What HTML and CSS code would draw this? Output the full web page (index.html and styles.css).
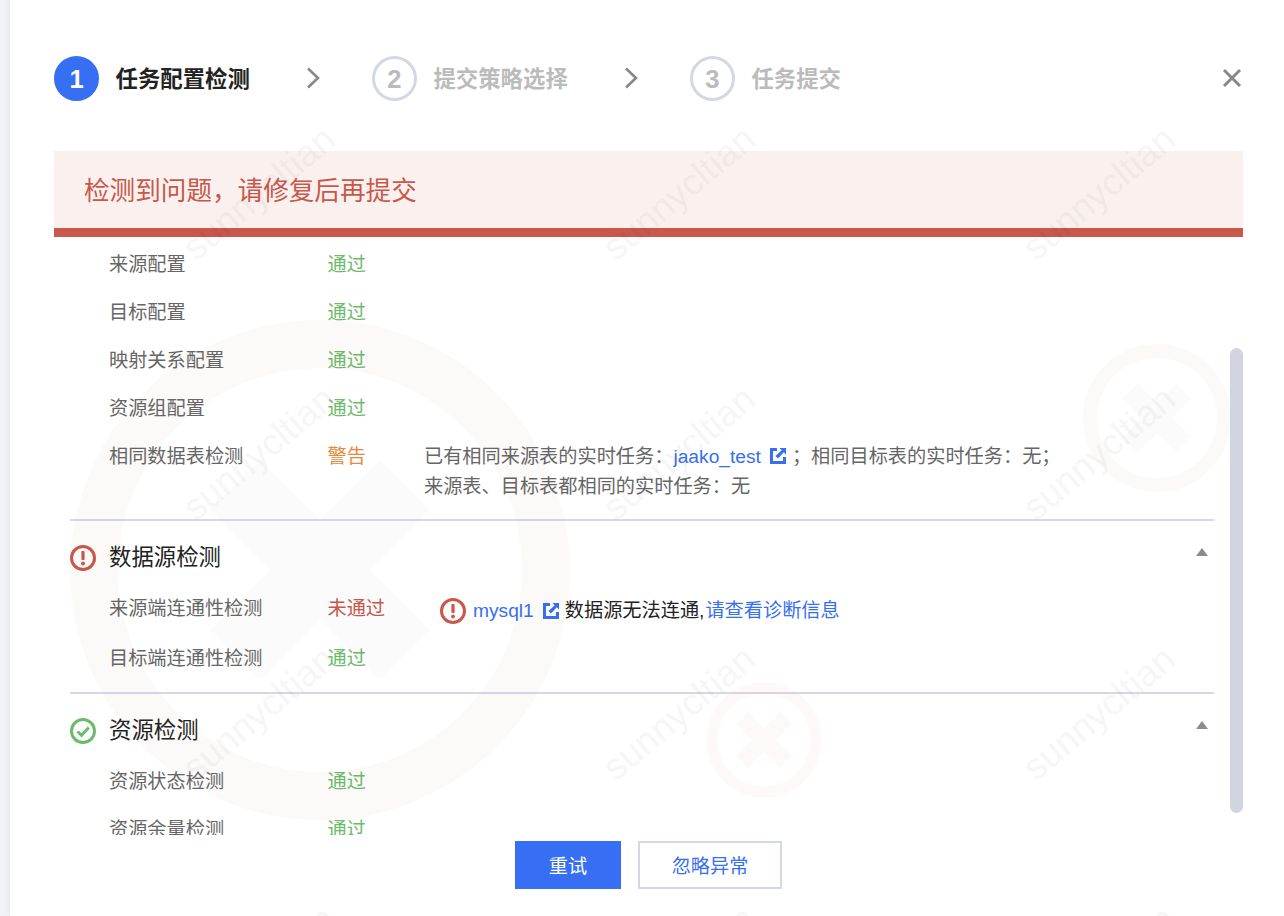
FILE: index.html
```html
<!DOCTYPE html>
<html lang="zh-CN">
<head>
<meta charset="utf-8">
<title>任务配置检测</title>
<link rel="stylesheet" href="styles.css">
</head>
<body>
<div class="modal">
  <header class="steps">
    <div class="step active"><span class="step-num">1</span><span class="step-name">任务配置检测</span></div>
    <svg class="chevron" viewBox="0 0 14 22"><path d="M2 1.500 12 11 2 20.500"/></svg>
    <div class="step"><span class="step-num">2</span><span class="step-name">提交策略选择</span></div>
    <svg class="chevron" viewBox="0 0 14 22"><path d="M2 1.500 12 11 2 20.500"/></svg>
    <div class="step"><span class="step-num">3</span><span class="step-name">任务提交</span></div>
    <svg class="close" viewBox="0 0 20 20"><path d="M2 2 18 18M18 2 2 18"/></svg>
  </header>

  <div class="banner">检测到问题，请修复后再提交</div>

  <div class="scroll">
    <section class="section first">
      <div class="row"><span class="label">来源配置</span><span class="status pass">通过</span></div>
      <div class="row"><span class="label">目标配置</span><span class="status pass">通过</span></div>
      <div class="row"><span class="label">映射关系配置</span><span class="status pass">通过</span></div>
      <div class="row"><span class="label">资源组配置</span><span class="status pass">通过</span></div>
      <div class="row"><span class="label">相同数据表检测</span><span class="status warn">警告</span>
        <div class="detail">
          <div>已有相同来源表的实时任务：<a class="link">jaako_test</a><svg class="ext" viewBox="0 0 16 16"><path class="ext-frame" d="M7 1.500H1.500V14.500H14.500V9"/><path class="ext-arrow" d="M9.500 0H16V6.500L13.800 4.300 8 10.500 5.500 8 11.700 2.200Z"/></svg><span class="semi">；</span>相同目标表的实时任务：无；</div>
          <div>来源表、目标表都相同的实时任务：无</div>
        </div>
      </div>
    </section>

    <section class="section">
      <div class="head">
        <svg class="state" viewBox="0 0 26 26"><circle class="ring-red" cx="13" cy="13" r="11.500"/><rect class="fill-red" x="11.400" y="6" width="3.200" height="9" rx="1"/><circle class="fill-red" cx="13" cy="18.500" r="1.900"/></svg>
        <h2>数据源检测</h2>
        <span class="caret"></span>
      </div>
      <div class="row tall"><span class="label">来源端连通性检测</span><span class="status fail">未通过</span>
        <div class="detail inline">
          <svg class="state" viewBox="0 0 26 26"><circle class="ring-red" cx="13" cy="13" r="11.500"/><rect class="fill-red" x="11.400" y="6" width="3.200" height="9" rx="1"/><circle class="fill-red" cx="13" cy="18.500" r="1.900"/></svg>
          <a class="link name">mysql1</a><svg class="ext" viewBox="0 0 16 16"><path class="ext-frame" d="M7 1.500H1.500V14.500H14.500V9"/><path class="ext-arrow" d="M9.500 0H16V6.500L13.800 4.300 8 10.500 5.500 8 11.700 2.200Z"/></svg><span class="dark">数据源无法连通,</span><a class="link diag">请查看诊断信息</a>
        </div>
      </div>
      <div class="row"><span class="label">目标端连通性检测</span><span class="status pass">通过</span></div>
    </section>

    <section class="section">
      <div class="head">
        <svg class="state" viewBox="0 0 26 26"><circle class="ring-green" cx="13" cy="13" r="11.500"/><path class="tick" d="M7.500 13.500 11.500 17.300 18.800 9.500"/></svg>
        <h2>资源检测</h2>
        <span class="caret"></span>
      </div>
      <div class="row"><span class="label">资源状态检测</span><span class="status pass">通过</span></div>
      <div class="row"><span class="label">资源余量检测</span><span class="status pass">通过</span></div>
    </section>
  </div>

  <footer class="actions">
    <button class="btn primary">重试</button>
    <button class="btn ghost">忽略异常</button>
  </footer>
</div>

<svg class="thumb-layer" viewBox="0 0 1284 916" aria-hidden="true">
  <rect class="thumb" x="1230" y="348" width="13" height="465" rx="6.500"/>
</svg>

<svg class="watermark" viewBox="0 0 1284 916" aria-hidden="true">
  <circle class="wm-ring" cx="320" cy="570" r="226" stroke-width="48"/>
  <path class="wm-x" d="M235 485 405 655M405 485 235 655" stroke-width="70"/>
  <circle class="wm-ring" cx="1157" cy="418" r="67" stroke-width="14"/>
  <path class="wm-x" d="M1130 391 1184 445M1184 391 1130 445" stroke-width="22"/>
  <circle class="wm-ring pink" cx="764" cy="740" r="52" stroke-width="11"/>
  <path class="wm-x pink" d="M742 718 786 762M786 718 742 762" stroke-width="17"/>
  <g class="wm-text">
    <text transform="translate(196 262) rotate(-40)">sunnycltian</text>
    <text transform="translate(616 262) rotate(-40)">sunnycltian</text>
    <text transform="translate(1036 262) rotate(-40)">sunnycltian</text>
    <text transform="translate(196 522) rotate(-40)">sunnycltian</text>
    <text transform="translate(616 522) rotate(-40)">sunnycltian</text>
    <text transform="translate(1036 522) rotate(-40)">sunnycltian</text>
    <text transform="translate(196 782) rotate(-40)">sunnycltian</text>
    <text transform="translate(616 782) rotate(-40)">sunnycltian</text>
    <text transform="translate(1036 782) rotate(-40)">sunnycltian</text>
    <text transform="translate(196 1042) rotate(-40)">sunnycltian</text>
    <text transform="translate(616 1042) rotate(-40)">sunnycltian</text>
    <text transform="translate(1036 1042) rotate(-40)">sunnycltian</text>
  </g>
</svg>
</body>
</html>
```
FILE: styles.css
```css
* { box-sizing: border-box; }

html, body {
  margin: 0;
  height: 916px;
  overflow: hidden;
  background: #f2f3f7;
}

body {
  position: relative;
  font-family: "Liberation Sans", "Noto Sans CJK SC", sans-serif;
  font-size: 19.2px;
  color: #666;
  text-spacing-trim: space-all;
}

.modal {
  margin-left: 10px;
  height: 916px;
  padding: 0 41px 0 44px;
  background: #fff;
  box-shadow: 0 0 6px rgba(120, 125, 145, 0.18);
  display: flex;
  flex-direction: column;
}

/* steps */
.steps {
  display: flex;
  align-items: center;
  height: 45px;
  margin-top: 56px;
  flex: none;
}

.step {
  display: flex;
  align-items: center;
  gap: 16.500px;
}

.step-num {
  width: 45px;
  height: 45px;
  padding-top: 2px;
  border-radius: 50%;
  border: 3px solid #d3d8e4;
  display: flex;
  align-items: center;
  justify-content: center;
  font-size: 25.6px;
  font-weight: 700;
  color: #bbb;
}

.step-name {
  margin-top: -3px;
  font-size: 22.4px;
  font-weight: 700;
  color: #bbb;
}

.step.active .step-num {
  background: #366ef4;
  border-color: #366ef4;
  color: #fff;
}

.step.active .step-name { color: #222; }

.chevron {
  width: 14px;
  height: 22px;
  margin: -2px 52.1px 0 56px;
  flex: none;
  fill: none;
  stroke: #888;
  stroke-width: 2.6;
}

.close {
  width: 20px;
  height: 20px;
  margin: -2px 1px 0 auto;
  fill: none;
  stroke: #888;
  stroke-width: 3;
}

/* banner */
.banner {
  flex: none;
  height: 86px;
  margin-top: 50px;
  padding: 0 30px 3px;
  display: flex;
  align-items: center;
  font-size: 25.6px;
  color: #c9574a;
  background: #faf1ef;
  border-bottom: 9px solid #c9574a;
}

/* scroll list */
.scroll {
  flex: none;
  height: 598px;
  overflow: hidden;
}

.section {
  margin: 0 29px 0 16px;
  padding-bottom: 9px;
  border-top: 2px solid #d5d9e5;
}

.section.first {
  border-top: 0;
  padding-top: 4px;
  padding-bottom: 17px;
}

.row {
  display: grid;
  grid-template-columns: 218.500px 96.500px 1fr;
  min-height: 48px;
  padding-left: 39px;
  line-height: 48px;
}

.row.tall { min-height: 50px; }

.pass { color: #6cbb6a; }
.warn { color: #e8893a; }
.fail { color: #c9574a; }

.detail {
  padding-top: 9px;
  line-height: 30px;
}

.detail.inline {
  display: flex;
  align-items: center;
  height: 48px;
  padding: 3px 0 0 16px;
  white-space: nowrap;
}

.link { color: #366ef4; }
.name { margin-left: 7px; }
.diag { margin-left: 1px; }
.dark { color: #222; margin-left: 6px; }
.semi { margin-left: 6px; }

.ext {
  display: inline-block;
  width: 16px;
  height: 16px;
  margin-left: 9px;
  vertical-align: -1px;
  flex: none;
}

.ext-frame { fill: none; stroke: #366ef4; stroke-width: 3; }
.ext-arrow { fill: #366ef4; }

.head {
  display: flex;
  align-items: center;
  padding-top: 22px;
  padding-bottom: 12px;
  line-height: 30px;
}

.head h2 {
  margin: 0 0 0 13px;
  font-size: 22.4px;
  font-weight: 400;
  color: #222;
}

.state {
  width: 26px;
  height: 26px;
  flex: none;
}

.ring-red { fill: none; stroke: #c9574a; stroke-width: 3; }
.fill-red { fill: #c9574a; }
.ring-green { fill: none; stroke: #6cbb6a; stroke-width: 3; }
.tick { fill: none; stroke: #6cbb6a; stroke-width: 3; }

.caret {
  margin: -13px 6px 0 auto;
  width: 0;
  height: 0;
  border-left: 6.500px solid transparent;
  border-right: 6.500px solid transparent;
  border-bottom: 8px solid #8c8c8c;
}

/* footer */
.actions {
  flex: none;
  display: flex;
  justify-content: center;
  gap: 17px;
  padding-top: 6px;
}

.btn {
  height: 48px;
  padding: 0;
  font: inherit;
  cursor: pointer;
}

.primary {
  width: 106px;
  background: #366ef4;
  border: 1px solid #366ef4;
  color: #fff;
}

.ghost {
  width: 144px;
  background: #fff;
  border: 2px solid #d3d8e4;
  color: #366ef4;
}

/* overlays */
.thumb-layer,
.watermark {
  position: absolute;
  left: 0;
  top: 0;
  width: 1284px;
  height: 916px;
  pointer-events: none;
}

.thumb { fill: #d0d5e0; }

.wm-ring { fill: none; stroke: #7a5a40; opacity: 0.032; }
.wm-x { fill: none; stroke: #7a5a40; opacity: 0.025; }
.wm-ring.pink, .wm-x.pink { stroke: #e0604a; opacity: 0.035; }

.wm-text text {
  font-family: "Liberation Sans", sans-serif;
  font-size: 37px;
  fill: #000;
  opacity: 0.03;
}
```
